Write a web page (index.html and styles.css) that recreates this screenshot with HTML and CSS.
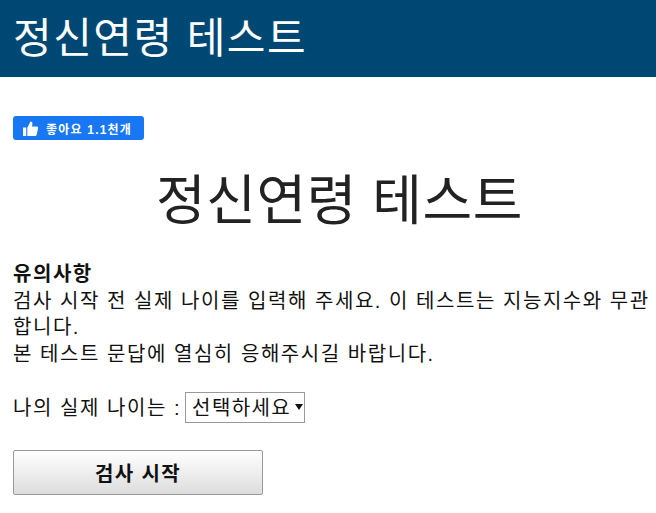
FILE: index.html
```html
<!DOCTYPE html>
<html lang="ko">
<head>
    <meta charset="UTF-8">
    <title>정신연령 테스트</title>
    <link rel="stylesheet" href="styles.css">
</head>
<body>
    <header class="top_bar">
        <div class="top_title">정신연령 테스트</div>
    </header>
    <section class="content">
        <div class="like_row">
            <button type="button" class="like_btn">
                <svg class="like_icon" viewBox="0 0 16 16" width="17" height="17">
                    <path fill="#fff" d="M1 7h3v8H1zM5 7.2 8 1.5c1.2 0 2 .9 1.8 2.2L9.4 6H14c.9 0 1.4.8 1.2 1.6l-1.4 6.2c-.2.7-.7 1.2-1.4 1.2H5z"/>
                </svg>
                <span>좋아요 1.1천개</span>
            </button>
        </div>
        <h1 class="page_title">정신연령 테스트</h1>
        <div class="notice">
            <b>유의사항</b><br>
            검사 시작 전 실제 나이를 입력해 주세요. 이 테스트는 지능지수와 무관합니다.<br>
            본 테스트 문답에 열심히 응해주시길 바랍니다.
        </div>
        <div class="age_row">
            <label for="age">나의 실제 나이는 :</label>
            <div class="select_wrap">
                <select id="age" class="age_select">
                    <option>선택하세요</option>
                </select>
            </div>
        </div>
        <button type="button" class="start_btn">검사 시작</button>
    </section>
</body>
</html>
```
FILE: styles.css
```css
* {
    box-sizing: border-box;
}

body {
    margin: 0;
    padding: 0;
    font-size: 20px;
    line-height: 26.6px;
    letter-spacing: 1.55px;
    color: #111;
    background-color: #fff;
    font-family: "Liberation Sans", "Noto Sans CJK KR", sans-serif;
}

.top_bar {
    height: 77px;
    padding: 0 13px;
    background-color: #004874;
    color: #fff;
}

.top_title {
    font-size: 42px;
    line-height: 77px;
    letter-spacing: 1.5px;
}

.content {
    padding: 39px 4px 0 13px;
}

.like_row {
    display: flex;
}

.like_btn {
    display: flex;
    align-items: center;
    gap: 7px;
    width: 131px;
    height: 24px;
    padding: 0 0 0 9px;
    border: 0;
    border-radius: 3px;
    background-color: #1877f2;
    color: #fff;
    font-family: inherit;
    font-size: 12px;
    font-weight: bold;
    letter-spacing: 1.2px;
}

.page_title {
    margin: 26px 0 0;
    padding-left: 14px;
    font-size: 54px;
    line-height: 70px;
    font-weight: normal;
    color: #222;
    letter-spacing: .5px;
    text-align: center;
}

.notice {
    margin-top: 25px;
}

.age_row {
    margin-top: 25px;
    display: flex;
    align-items: center;
    gap: 4px;
}

.select_wrap {
    position: relative;
    width: 120px;
    height: 31px;
}

.select_wrap::after {
    content: "";
    position: absolute;
    right: 2px;
    top: 12px;
    border-left: 4px solid transparent;
    border-right: 4px solid transparent;
    border-top: 6px solid #111;
}

.age_select {
    width: 100%;
    height: 100%;
    padding: 0 0 0 6px;
    appearance: none;
    font-family: inherit;
    font-size: 20px;
    letter-spacing: 1.4px;
    background-color: #fff;
    color: #111;
    border: 1px solid #999;
    border-radius: 0;
}

.start_btn {
    display: block;
    width: 250px;
    height: 45px;
    margin-top: 27px;
    border: 1px solid #999;
    border-radius: 2px;
    background: linear-gradient(#fff, #ddd);
    color: #111;
    font-family: inherit;
    font-size: 20px;
    font-weight: bold;
    letter-spacing: 1.4px;
}
```
